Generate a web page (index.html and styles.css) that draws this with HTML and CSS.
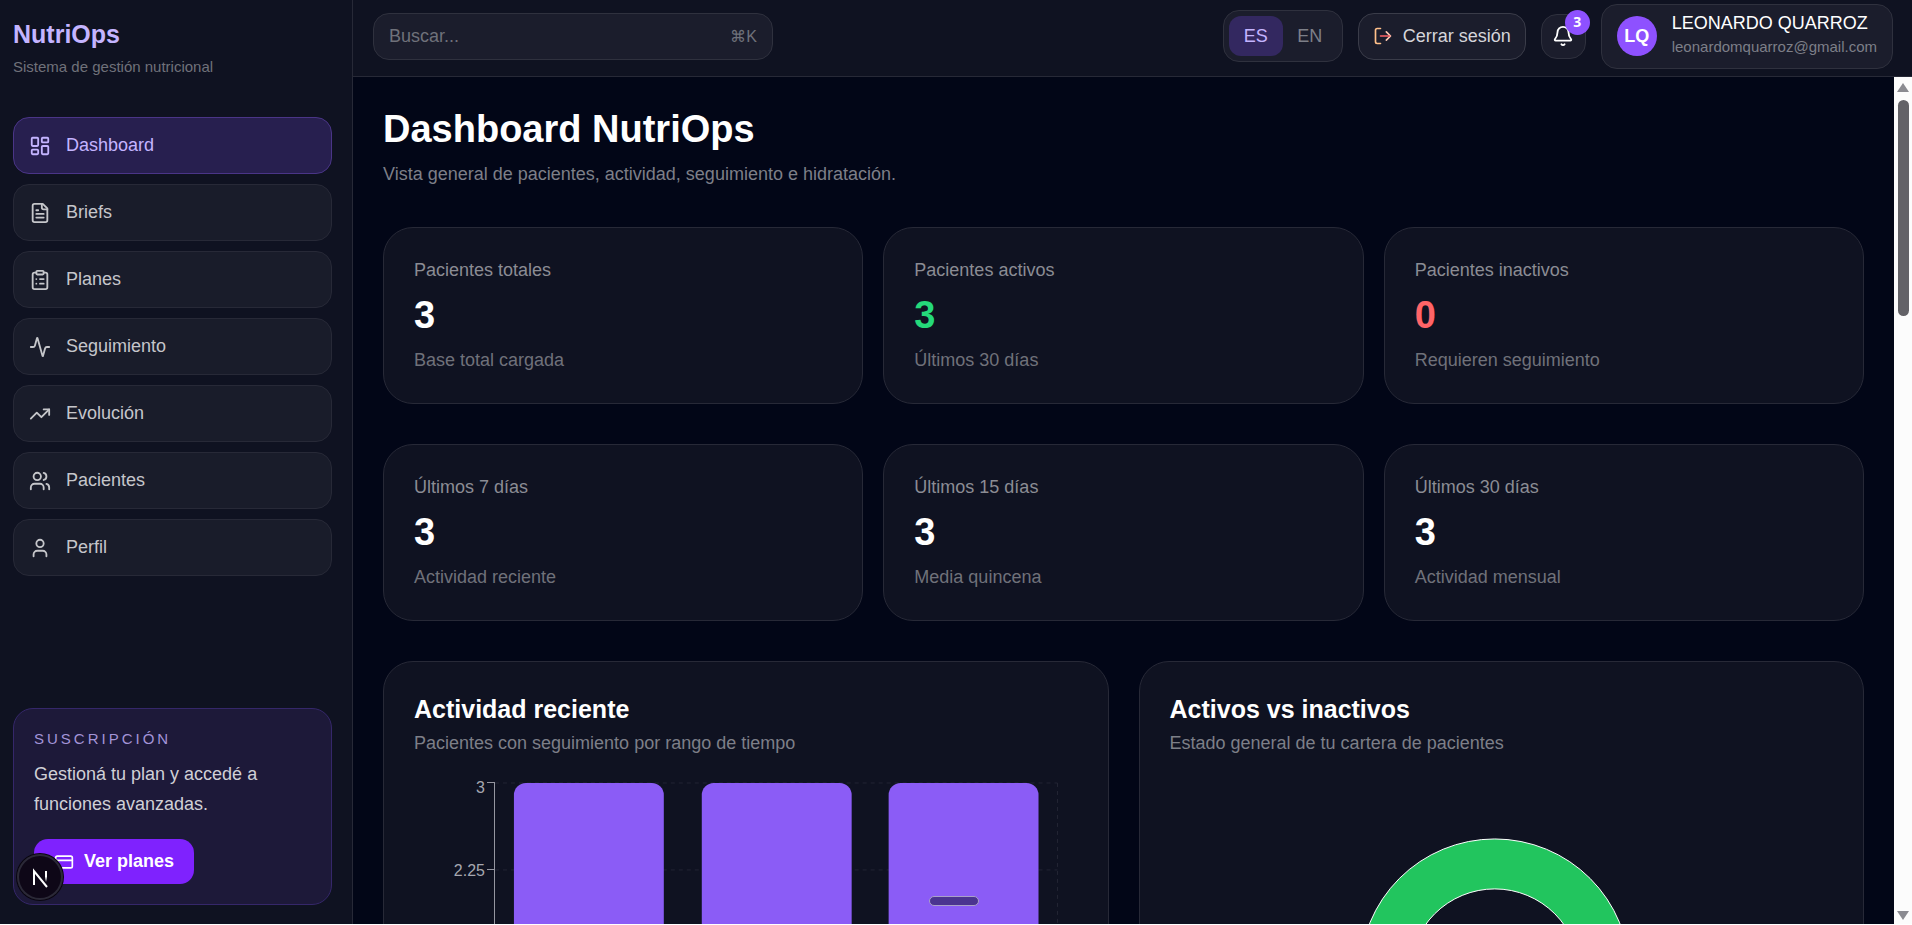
FILE: index.html
```
<!DOCTYPE html>
<html lang="es">
<head>
    <meta charset="UTF-8">
    <meta name="viewport" content="width=device-width, initial-scale=1.0">
    <title>NutriOps</title>
    <link rel="stylesheet" href="styles.css">
</head>
<body>
    <div class="app">
        <!-- Sidebar -->
        <aside class="sidebar">
            <div class="brand">
                <p class="brand-name">NutriOps</p>
                <p class="brand-sub">Sistema de gestión nutricional</p>
            </div>

            <nav class="nav">
                <a href="#" class="nav-link active">
                    <svg class="icon" viewBox="0 0 24 24"><rect x="3" y="3" width="7" height="9" rx="1"/><rect x="14" y="3" width="7" height="5" rx="1"/><rect x="14" y="12" width="7" height="9" rx="1"/><rect x="3" y="16" width="7" height="5" rx="1"/></svg>
                    Dashboard
                </a>
                <a href="#" class="nav-link">
                    <svg class="icon" viewBox="0 0 24 24"><path d="M15 2H6a2 2 0 0 0-2 2v16a2 2 0 0 0 2 2h12a2 2 0 0 0 2-2V7Z"/><path d="M14 2v4a2 2 0 0 0 2 2h4"/><path d="M10 9H8"/><path d="M16 13H8"/><path d="M16 17H8"/></svg>
                    Briefs
                </a>
                <a href="#" class="nav-link">
                    <svg class="icon" viewBox="0 0 24 24"><rect x="8" y="2" width="8" height="4" rx="1"/><path d="M16 4h2a2 2 0 0 1 2 2v14a2 2 0 0 1-2 2H6a2 2 0 0 1-2-2V6a2 2 0 0 1 2-2h2"/><path d="M12 11h4"/><path d="M12 16h4"/><path d="M8 11h.01"/><path d="M8 16h.01"/></svg>
                    Planes
                </a>
                <a href="#" class="nav-link">
                    <svg class="icon" viewBox="0 0 24 24"><path d="M22 12h-2.48a2 2 0 0 0-1.93 1.46l-2.35 8.36a.25.25 0 0 1-.48 0L9.24 2.18a.25.25 0 0 0-.48 0l-2.35 8.36A2 2 0 0 1 4.49 12H2"/></svg>
                    Seguimiento
                </a>
                <a href="#" class="nav-link">
                    <svg class="icon" viewBox="0 0 24 24"><path d="M16 7h6v6"/><path d="m22 7-8.5 8.5-5-5L2 17"/></svg>
                    Evolución
                </a>
                <a href="#" class="nav-link">
                    <svg class="icon" viewBox="0 0 24 24"><path d="M16 21v-2a4 4 0 0 0-4-4H6a4 4 0 0 0-4 4v2"/><circle cx="9" cy="7" r="4"/><path d="M16 3.13a4 4 0 0 1 0 7.75"/><path d="M22 21v-2a4 4 0 0 0-3-3.87"/></svg>
                    Pacientes
                </a>
                <a href="#" class="nav-link">
                    <svg class="icon" viewBox="0 0 24 24"><path d="M19 21v-2a4 4 0 0 0-4-4H9a4 4 0 0 0-4 4v2"/><circle cx="12" cy="7" r="4"/></svg>
                    Perfil
                </a>
            </nav>

            <div class="plan-card">
                <p class="plan-label">SUSCRIPCIÓN</p>
                <p class="plan-text">Gestioná tu plan y accedé a funciones avanzadas.</p>
                <button class="plan-btn">
                    <svg class="icon" viewBox="0 0 24 24"><rect x="2" y="5" width="20" height="14" rx="2"/><path d="M2 10h20"/></svg>
                    Ver planes
                </button>
            </div>
        </aside>

        <div class="main">
            <!-- Top bar -->
            <header class="topbar">
                <div class="search">
                    <input type="text" placeholder="Buscar..." aria-label="Buscar">
                    <span class="shortcut">⌘K</span>
                </div>
                <div class="lang">
                    <button class="lang-btn selected">ES</button>
                    <button class="lang-btn">EN</button>
                </div>
                <button class="logout">
                    <svg class="icon" viewBox="0 0 24 24"><path class="door" d="M9 21H5a2 2 0 0 1-2-2V5a2 2 0 0 1 2-2h4"/><path class="arrow-head" d="m16 17 5-5-5-5"/><path class="arrow" d="M20 12H9"/></svg>
                    Cerrar sesión
                </button>
                <button class="bell" aria-label="Notificaciones">
                    <svg class="icon" viewBox="0 0 24 24"><path d="M10.27 21a2 2 0 0 0 3.46 0"/><path d="M3.26 15.33A1 1 0 0 0 4 17h16a1 1 0 0 0 .74-1.67C19.41 13.96 18 12.5 18 8A6 6 0 0 0 6 8c0 4.5-1.41 5.96-2.74 7.33"/></svg>
                    <span class="bell-count">3</span>
                </button>
                <div class="user">
                    <span class="avatar">LQ</span>
                    <div>
                        <p class="user-name">LEONARDO QUARROZ</p>
                        <p class="user-mail">leonardomquarroz@gmail.com</p>
                    </div>
                </div>
            </header>

            <div class="scroll-area">
                <main class="content">
                    <h1>Dashboard NutriOps</h1>
                    <p class="subtitle">Vista general de pacientes, actividad, seguimiento e hidratación.</p>

                    <!-- Patient totals -->
                    <section class="stats">
                        <div class="stat">
                            <p class="stat-label">Pacientes totales</p>
                            <p class="stat-value">3</p>
                            <p class="stat-note">Base total cargada</p>
                        </div>
                        <div class="stat">
                            <p class="stat-label">Pacientes activos</p>
                            <p class="stat-value green">3</p>
                            <p class="stat-note">Últimos 30 días</p>
                        </div>
                        <div class="stat">
                            <p class="stat-label">Pacientes inactivos</p>
                            <p class="stat-value red">0</p>
                            <p class="stat-note">Requieren seguimiento</p>
                        </div>
                    </section>

                    <!-- Activity by period -->
                    <section class="stats">
                        <div class="stat">
                            <p class="stat-label">Últimos 7 días</p>
                            <p class="stat-value">3</p>
                            <p class="stat-note">Actividad reciente</p>
                        </div>
                        <div class="stat">
                            <p class="stat-label">Últimos 15 días</p>
                            <p class="stat-value">3</p>
                            <p class="stat-note">Media quincena</p>
                        </div>
                        <div class="stat">
                            <p class="stat-label">Últimos 30 días</p>
                            <p class="stat-value">3</p>
                            <p class="stat-note">Actividad mensual</p>
                        </div>
                    </section>

                    <!-- Charts -->
                    <section class="charts">
                        <div class="chart-card">
                            <h2>Actividad reciente</h2>
                            <p class="chart-sub">Pacientes con seguimiento por rango de tiempo</p>
                            <svg class="chart" viewBox="0 0 664 360">
                                <g class="grid">
                                    <path d="M81 5H644M81 92H644M81 180H644M81 267H644M644 5V354"/>
                                </g>
                                <g class="bars">
                                    <path d="M100 354V17a12 12 0 0 1 12-12h126a12 12 0 0 1 12 12v337z"/>
                                    <path d="M288 354V17a12 12 0 0 1 12-12h126a12 12 0 0 1 12 12v337z"/>
                                    <path d="M475 354V17a12 12 0 0 1 12-12h126a12 12 0 0 1 12 12v337z"/>
                                </g>
                                <path class="axis" d="M73 5H81V354M73 92H81M73 180H81M73 267H81"/>
                                <g class="ticks">
                                    <text x="71" y="15">3</text>
                                    <text x="71" y="98">2.25</text>
                                </g>
                            </svg>
                        </div>
                        <div class="chart-card">
                            <h2>Activos vs inactivos</h2>
                            <p class="chart-sub">Estado general de tu cartera de pacientes</p>
                            <svg class="chart" viewBox="0 0 664 360">
                                <circle class="donut" cx="325" cy="196" r="110"/>
                                <circle class="donut-line" cx="325" cy="196" r="135"/>
                                <circle class="donut-line" cx="325" cy="196" r="85"/>
                            </svg>
                        </div>
                    </section>
                </main>

                <div class="scrollbar">
                    <svg width="12" height="9" viewBox="0 0 12 9"><path d="M6 0 12 9H0z"/></svg>
                    <span class="thumb"></span>
                    <svg width="12" height="9" viewBox="0 0 12 9"><path d="M6 9 0 0h12z"/></svg>
                </div>
            </div>
        </div>
    </div>

    <span class="drag-pill"></span>
    <button class="dev-badge" aria-label="Next.js">
        <svg width="46" height="46" viewBox="0 0 46 46">
            <defs>
                <linearGradient id="fade" x1="0" y1="0" x2="0" y2="1">
                    <stop offset="0.5" stop-color="#fff"/>
                    <stop offset="1" stop-color="#fff" stop-opacity="0"/>
                </linearGradient>
            </defs>
            <path d="M17 31V17L30 33" fill="none" stroke="#fff" stroke-width="2"/>
            <rect x="28" y="17" width="2" height="11" fill="url(#fade)"/>
        </svg>
    </button>
</body>
</html>
```
FILE: styles.css
```
* {
    box-sizing: border-box;
}

body {
    margin: 0;
    background-color: #fff;
    color: #fff;
    font-family: "Liberation Sans", Arial, sans-serif;
    font-size: 18px;
}

p, h1, h2 {
    margin: 0;
}

button, input {
    font: inherit;
    color: inherit;
}

button {
    cursor: pointer;
}

.icon {
    width: 22px;
    height: 22px;
    flex: none;
    fill: none;
    stroke: currentColor;
    stroke-width: 2;
    stroke-linecap: round;
    stroke-linejoin: round;
}

.app {
    display: flex;
    height: 100vh;
    overflow: hidden;
    border-bottom: 1px solid #fff;
    background-color: #020617;
}

/* Sidebar */
.sidebar {
    display: flex;
    flex-direction: column;
    width: 353px;
    flex: none;
    padding: 17px 20px 19px 13px;
    background-color: #0f1221;
    border-right: 1px solid #272937;
}

.brand {
    margin-bottom: 40px;
}

.brand-name {
    color: #c4b4ff;
    font-size: 25px;
    font-weight: bold;
    line-height: 34px;
}

.brand-sub {
    margin-top: 5px;
    color: #6f717a;
    font-size: 15px;
    line-height: 21px;
}

.nav {
    display: flex;
    flex-direction: column;
    gap: 10px;
}

.nav-link {
    display: flex;
    align-items: center;
    gap: 15px;
    height: 57px;
    padding: 0 15px;
    border: 1px solid #272937;
    border-radius: 16px;
    background-color: #191c2a;
    color: #c5c6ca;
    text-decoration: none;
}

.nav-link.active {
    border-color: #4a3587;
    background-color: #271f4f;
    color: #c4b4ff;
}

.plan-card {
    margin-top: auto;
    padding: 18px 20px 20px;
    border: 1px solid #35276a;
    border-radius: 20px;
    background-color: #1d1939;
}

.plan-label {
    color: #a394d8;
    font-size: 15px;
    letter-spacing: 3px;
    line-height: 24px;
}

.plan-text {
    margin-top: 8px;
    color: #d0d0d6;
    line-height: 30px;
}

.plan-btn {
    display: inline-flex;
    align-items: center;
    gap: 10px;
    height: 45px;
    margin-top: 20px;
    padding: 0 20px;
    border: none;
    border-radius: 14px;
    background-color: #7f22fe;
    color: #fff;
    font-weight: bold;
}

.plan-btn .icon {
    width: 20px;
    height: 20px;
}

/* Top bar */
.main {
    display: flex;
    flex-direction: column;
    flex: 1;
    min-width: 0;
}

.topbar {
    display: flex;
    align-items: center;
    gap: 15px;
    flex: none;
    height: 77px;
    padding: 0 19px 4px 20px;
    border-bottom: 1px solid #272937;
    background-color: #0f1221;
}

.search {
    display: flex;
    align-items: center;
    width: 400px;
    height: 47px;
    margin-right: auto;
    padding: 0 15px;
    border: 1px solid #2f313e;
    border-radius: 16px;
    background-color: #1b1d2c;
}

.search input {
    flex: 1;
    min-width: 0;
    padding: 0;
    border: none;
    outline: none;
    background: none;
}

.search input::placeholder {
    color: #6f717a;
    opacity: 1;
}

.shortcut {
    color: #6f717a;
    font-size: 16px;
}

.lang {
    display: flex;
    padding: 5px;
    border: 1px solid #2f313e;
    border-radius: 16px;
    background-color: #1b1d2c;
}

.lang-btn {
    width: 54px;
    height: 40px;
    padding: 0;
    border: none;
    border-radius: 12px;
    background: none;
    color: #7d7f88;
}

.lang-btn.selected {
    background-color: #332860;
    color: #c4b4ff;
}

.logout {
    display: flex;
    align-items: center;
    gap: 10px;
    height: 47px;
    padding: 0 14px;
    border: 1px solid #3a3c49;
    border-radius: 16px;
    background-color: #1b1d2c;
    color: #d5d5da;
}

.logout .icon {
    width: 20px;
    height: 20px;
}

.door {
    stroke: #ffc08a;
}

.arrow {
    stroke: #ff6467;
}

.arrow-head {
    stroke: #ffc9b4;
}

.bell {
    position: relative;
    display: flex;
    align-items: center;
    justify-content: center;
    width: 45px;
    height: 45px;
    padding: 0;
    border: 1px solid #2f313e;
    border-radius: 16px;
    background-color: #1b1d2c;
}

.bell-count {
    position: absolute;
    top: -5px;
    right: -5px;
    width: 25px;
    height: 25px;
    border-radius: 50%;
    background-color: #8e51ff;
    font-family: "Open Sans", sans-serif;
    font-size: 14px;
    font-weight: bold;
    line-height: 24px;
    text-align: center;
}

.user {
    display: flex;
    align-items: center;
    gap: 15px;
    height: 65px;
    padding: 0 15px;
    border: 1px solid #2f313e;
    border-radius: 16px;
    background-color: #1b1d2c;
}

.avatar {
    display: flex;
    align-items: center;
    justify-content: center;
    width: 40px;
    height: 40px;
    border-radius: 50%;
    background-color: #8e51ff;
    font-weight: bold;
}

.user-name {
    line-height: 24px;
}

.user-mail {
    padding-bottom: 2px;
    color: #7d7f88;
    font-size: 15px;
    line-height: 24px;
}

/* Content */
.scroll-area {
    display: flex;
    flex: 1;
    min-height: 0;
}

.content {
    flex: 1;
    min-width: 0;
    padding: 30px;
    overflow: hidden;
}

h1 {
    font-size: 38px;
    line-height: 44px;
}

.subtitle {
    margin-top: 8px;
    color: #7d7f88;
    line-height: 30px;
}

.stats {
    display: grid;
    grid-template-columns: repeat(3, 1fr);
    gap: 20px;
    margin-top: 38px;
}

.stat {
    padding: 28px 30px 29px;
    border: 1px solid #272937;
    border-radius: 30px;
    background-color: #0f1221;
}

.stats + .stats {
    margin-top: 40px;
}

.stat-label {
    color: #8b8c94;
    line-height: 28px;
}

.stat-value {
    margin-top: 10px;
    font-size: 38px;
    font-weight: bold;
    line-height: 42px;
}

.green {
    color: #25d97a;
}

.red {
    color: #ff6467;
}

.stat-note {
    margin-top: 10px;
    color: #6f717a;
    line-height: 28px;
}

.charts {
    display: grid;
    grid-template-columns: repeat(2, 1fr);
    gap: 30px;
    margin-top: 40px;
}

.chart-card {
    padding: 30px;
    border: 1px solid #272937;
    border-radius: 30px;
    background-color: #0f1221;
}

h2 {
    font-size: 25px;
    line-height: 34px;
}

.chart-sub {
    color: #7d7f88;
    line-height: 34px;
}

.chart {
    display: block;
    width: 100%;
    margin-top: 18px;
}

.grid {
    fill: none;
    stroke: #222433;
    stroke-dasharray: 4 4;
}

.bars {
    fill: #8b5cf6;
}

.axis {
    fill: none;
    stroke: #9596a0;
    shape-rendering: crispEdges;
}

.ticks {
    fill: #a6a7b0;
    font-size: 16px;
    text-anchor: end;
}

.donut {
    fill: none;
    stroke: #22c55e;
    stroke-width: 50;
}

.donut-line {
    fill: none;
    stroke: #fff;
}

/* Scrollbar */
.scrollbar {
    display: flex;
    flex-direction: column;
    align-items: center;
    gap: 8px;
    width: 18px;
    flex: none;
    padding: 6px 0 4px;
    background-color: #fcfcfc;
    fill: #8b8b91;
}

.thumb {
    width: 11px;
    height: 216px;
    margin-bottom: auto;
    border-radius: 6px;
    background-color: #636267;
}

/* Floating items */
.drag-pill {
    position: fixed;
    left: 929px;
    bottom: 19px;
    width: 50px;
    height: 10px;
    border: 1px solid #a9a0c8;
    border-radius: 5px;
    background-color: #4b3490;
}

.dev-badge {
    position: fixed;
    left: 17px;
    bottom: 25px;
    width: 46px;
    height: 46px;
    padding: 0;
    border: none;
    border-radius: 50%;
    background-color: #0e0717;
    box-shadow: inset 0 0 0 2px #2b2937, 0 0 0 1px #09060f;
}
```
